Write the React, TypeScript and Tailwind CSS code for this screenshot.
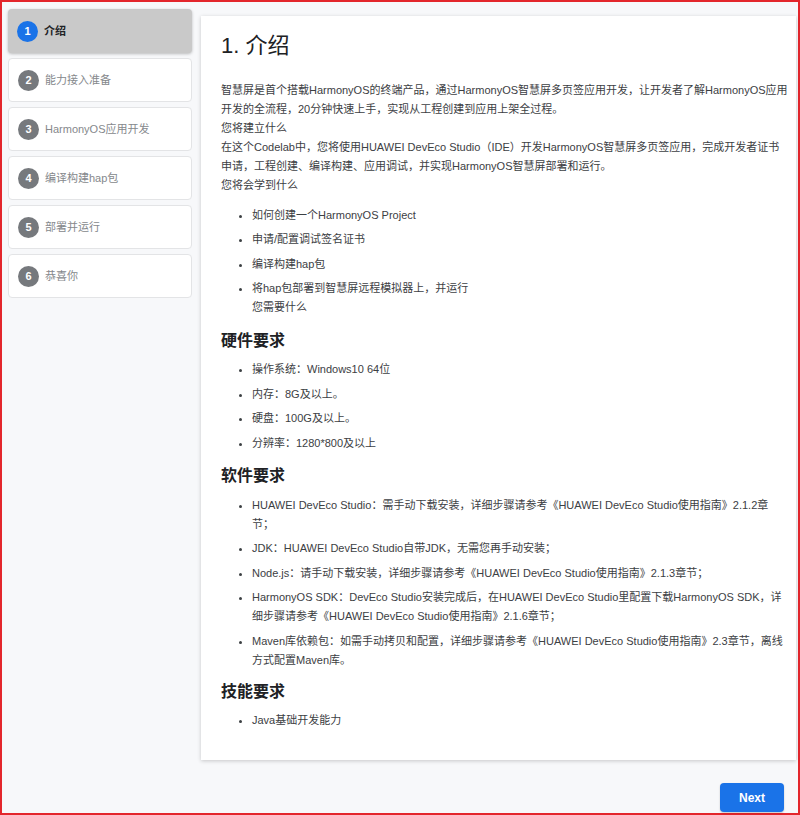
import * as React from "react";

const steps = [
  "介绍",
  "能力接入准备",
  "HarmonyOS应用开发",
  "编译构建hap包",
  "部署并运行",
  "恭喜你",
];

const font = {
  fontFamily: '"Liberation Sans", Arial, "Noto Sans CJK SC", sans-serif',
};

function StepCard({ index, label, active }: { index: number; label: string; active: boolean }) {
  return (
    <div
      className={
        active
          ? "flex h-[44px] items-center rounded-[4px] bg-[#c9c9c9] pl-[9px] shadow-[0_1px_3px_rgba(0,0,0,0.25)]"
          : "flex h-[44px] items-center rounded-[4px] border border-[#e3e4e6] bg-white pl-[9px]"
      }
    >
      <span
        className={
          active
            ? "flex h-[21px] w-[21px] items-center justify-center rounded-full bg-[#1a73e8] text-[11px] font-bold text-white"
            : "flex h-[21px] w-[21px] items-center justify-center rounded-full bg-[#76797d] text-[11px] font-bold text-white"
        }
      >
        {index}
      </span>
      <span
        className={
          active
            ? "ml-[6px] text-[11px] font-bold text-[#202124]"
            : "ml-[6px] text-[11px] text-[#85888c]"
        }
      >
        {label}
      </span>
    </div>
  );
}

export default function App() {
  return (
    <div
      className="flex h-[815px] w-[800px] flex-col border-2 border-[#e3262c] bg-[#f7f8fa]"
      style={font}
    >
      <div className="flex pr-[2px] pl-[6px] pt-[7px]">
        {/* sidebar */}
        <div className="flex w-[184px] shrink-0 flex-col gap-[5px]">
          {steps.map((s, i) => (
            <StepCard key={s} index={i + 1} label={s} active={i === 0} />
          ))}
        </div>

        {/* main content */}
        <div className="ml-[9px] mt-[7px] h-[744px] flex-1 bg-white pl-[20px] pr-[10px] pt-[16px] text-[11px] leading-[19px] text-[#3c4043] shadow-[0_1px_4px_rgba(0,0,0,0.2)]">
          <h1 className="text-[22px] leading-[28px] text-[#202124]">1. 介绍</h1>
          <div className="mt-[20.5px]">
            <p className="-mr-[8px]">
              智慧屏是首个搭载HarmonyOS的终端产品，通过HarmonyOS智慧屏多页签应用开发，让开发者了解HarmonyOS应用开发的全流程，20分钟快速上手，实现从工程创建到应用上架全过程。
            </p>
            <p>您将建立什么</p>
            <p>
              在这个Codelab中，您将使用HUAWEI DevEco Studio（IDE）开发HarmonyOS智慧屏多页签应用，完成开发者证书申请，工程创建、编译构建、应用调试，并实现HarmonyOS智慧屏部署和运行。
            </p>
            <p>您将会学到什么</p>
          </div>
          <ul className="mt-[11px] list-disc space-y-[5.5px] pl-[31px]">
            <li>如何创建一个HarmonyOS Project</li>
            <li>申请/配置调试签名证书</li>
            <li>编译构建hap包</li>
            <li>
              将hap包部署到智慧屏远程模拟器上，并运行
              <br />
              您需要什么
            </li>
          </ul>

          <h2 className="mt-[11.5px] text-[16px] font-bold leading-[24px] text-[#202124]">硬件要求</h2>
          <ul className="mt-[7.5px] list-disc space-y-[5.5px] pl-[31px]">
            <li>操作系统：Windows10 64位</li>
            <li>内存：8G及以上。</li>
            <li>硬盘：100G及以上。</li>
            <li>分辨率：1280*800及以上</li>
          </ul>

          <h2 className="mt-[11.5px] text-[16px] font-bold leading-[24px] text-[#202124]">软件要求</h2>
          <ul className="mt-[7.5px] list-disc space-y-[5.5px] pl-[31px]">
            <li>
              HUAWEI DevEco Studio：需手动下载安装，详细步骤请参考《HUAWEI DevEco Studio使用指南》2.1.2章节；
            </li>
            <li>JDK：HUAWEI DevEco Studio自带JDK，无需您再手动安装；</li>
            <li>Node.js：请手动下载安装，详细步骤请参考《HUAWEI DevEco Studio使用指南》2.1.3章节；</li>
            <li>
              HarmonyOS SDK：DevEco Studio安装完成后，在HUAWEI DevEco Studio里配置下载HarmonyOS SDK，详细步骤请参考《HUAWEI DevEco Studio使用指南》2.1.6章节；
            </li>
            <li>
              Maven库依赖包：如需手动拷贝和配置，详细步骤请参考《HUAWEI DevEco Studio使用指南》2.3章节，离线方式配置Maven库。
            </li>
          </ul>

          <h2 className="mt-[10.5px] text-[16px] font-bold leading-[24px] text-[#202124]">技能要求</h2>
          <ul className="mt-[6.5px] list-disc pl-[31px]">
            <li>Java基础开发能力</li>
          </ul>
        </div>
      </div>

      <div className="mt-[23px] flex justify-end pr-[14px]">
        <button className="h-[29px] w-[64px] rounded-[4px] bg-[#1a73e8] text-[12px] font-bold text-white shadow-[0_1px_2px_rgba(0,0,0,0.2)]">
          Next
        </button>
      </div>
    </div>
  );
}
